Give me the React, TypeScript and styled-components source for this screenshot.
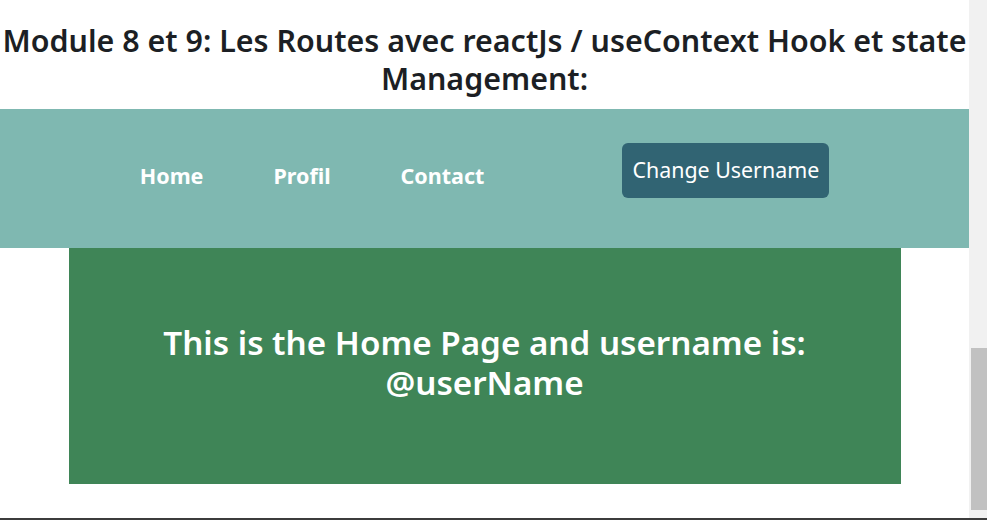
import styled, { createGlobalStyle } from "styled-components";

const GlobalStyle = createGlobalStyle`
  html, body {
    margin: 0;
    padding: 0;
    overflow: hidden;
    background: #fff;
  }
  * { box-sizing: border-box; }
`;

const links = ["Home", "Profil", "Contact"];

const App = () => {
  return (
    <Shell>
      <GlobalStyle />
      <Row>
        <Main>
          <Title>Module 8 et 9: Les Routes avec reactJs / useContext Hook et state Management:</Title>
          <Nav>
            <LinkList>
              {links.map((l) => (
                <NavLink key={l} href="#">{l}</NavLink>
              ))}
            </LinkList>
            <ChangeButton>Change Username</ChangeButton>
          </Nav>
          <HomeCard>
            <CardText>This is the Home Page and username is: @userName</CardText>
          </HomeCard>
        </Main>
        <ScrollTrack>
          <ScrollThumb />
        </ScrollTrack>
      </Row>
      <BottomEdge />
    </Shell>
  );
};

export default App;

const Shell = styled.div`
  height: 520px;
  display: flex;
  flex-direction: column;
  font-family: "Noto Sans", "Open Sans", sans-serif;
`;

const Row = styled.div`
  flex: 1;
  display: flex;
  min-height: 0;
`;

const Main = styled.main`
  flex: 1;
  min-width: 0;
  display: flex;
  flex-direction: column;
`;

const Title = styled.h1`
  margin: 0 0 11px;
  padding: 22px 0 0;
  text-align: center;
  font-size: 30.4px;
  line-height: 38px;
  font-weight: 600;
  color: #1c1f24;
`;

const Nav = styled.nav`
  height: 139px;
  background: #7fb8b1;
  display: flex;
  justify-content: center;
  align-items: flex-start;
  padding-top: 34px;
`;

const LinkList = styled.div`
  display: flex;
  gap: 70px;
  margin-top: 19px;
  margin-right: 138px;
`;

const NavLink = styled.a`
  color: #fff;
  text-decoration: none;
  font-size: 21.5px;
  line-height: 28px;
  font-weight: 700;
`;

const ChangeButton = styled.button`
  height: 55px;
  padding: 13px 10px 14px;
  border: none;
  border-radius: 6px;
  background: #316473;
  color: #fff;
  font-family: inherit;
  font-size: 21.4px;
  line-height: 24px;
  cursor: pointer;
`;

const HomeCard = styled.section`
  width: 832px;
  height: 236px;
  margin: 0 auto;
  background: #3f8557;
  padding: 75px 60px 0;
`;

const CardText = styled.h2`
  margin: 0;
  text-align: center;
  color: #fff;
  font-size: 33.2px;
  line-height: 40px;
  font-weight: 600;
`;

const ScrollTrack = styled.div`
  width: 18px;
  background: #f1f1f1;
  padding: 348px 0 8px 2px;
`;

const ScrollThumb = styled.div`
  height: 162px;
  background: #c1c1c1;
`;

const BottomEdge = styled.div`
  height: 2px;
  background: #3c3c3c;
`;
